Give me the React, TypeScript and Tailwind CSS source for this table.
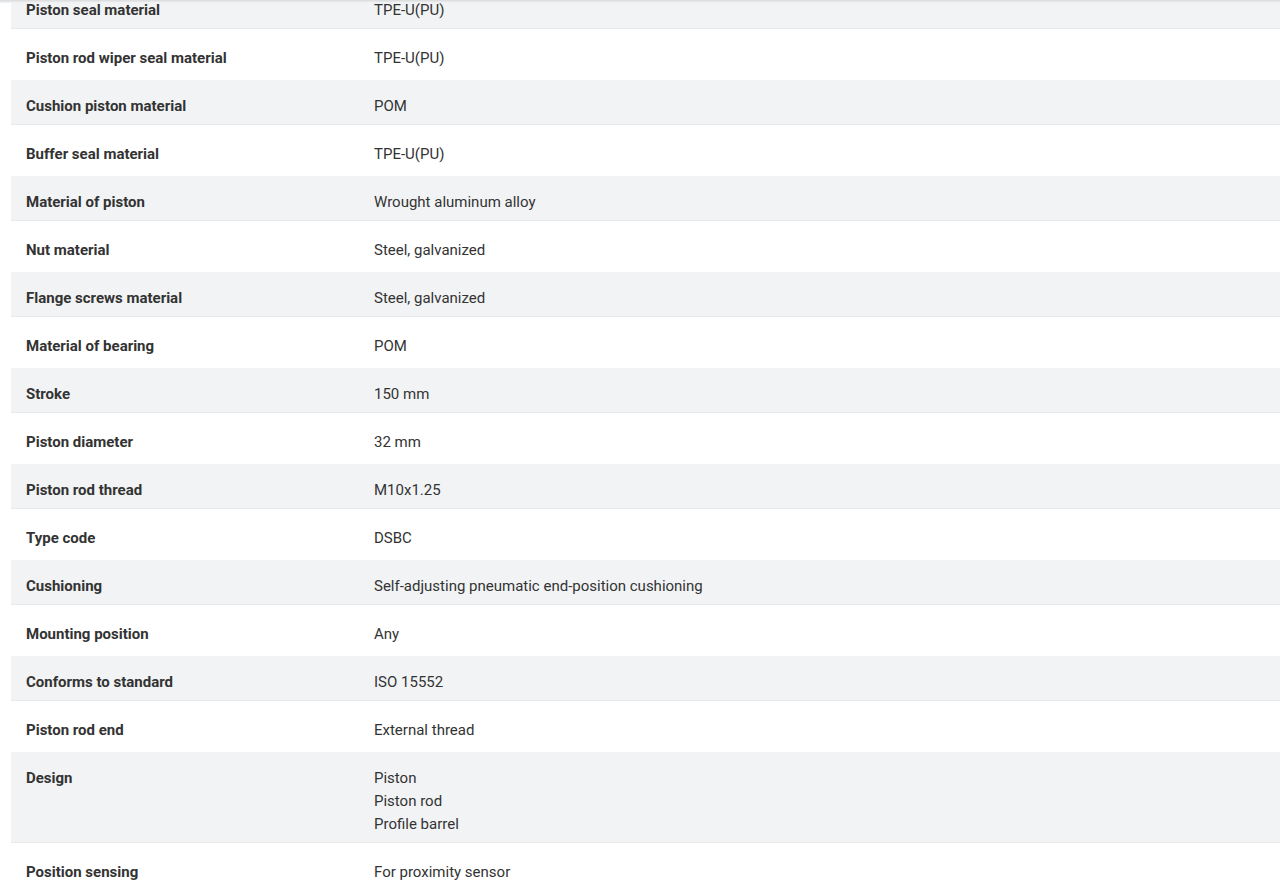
const rows: { label: string; value: string[] }[] = [
  { label: "Piston seal material", value: ["TPE-U(PU)"] },
  { label: "Piston rod wiper seal material", value: ["TPE-U(PU)"] },
  { label: "Cushion piston material", value: ["POM"] },
  { label: "Buffer seal material", value: ["TPE-U(PU)"] },
  { label: "Material of piston", value: ["Wrought aluminum alloy"] },
  { label: "Nut material", value: ["Steel, galvanized"] },
  { label: "Flange screws material", value: ["Steel, galvanized"] },
  { label: "Material of bearing", value: ["POM"] },
  { label: "Stroke", value: ["150 mm"] },
  { label: "Piston diameter", value: ["32 mm"] },
  { label: "Piston rod thread", value: ["M10x1.25"] },
  { label: "Type code", value: ["DSBC"] },
  { label: "Cushioning", value: ["Self-adjusting pneumatic end-position cushioning"] },
  { label: "Mounting position", value: ["Any"] },
  { label: "Conforms to standard", value: ["ISO 15552"] },
  { label: "Piston rod end", value: ["External thread"] },
  { label: "Design", value: ["Piston", "Piston rod", "Profile barrel"] },
  { label: "Position sensing", value: ["For proximity sensor"] },
];

export default function App() {
  return (
    <div
      className="relative h-[880px] overflow-hidden bg-white text-[15px] text-[#333]"
      style={{ fontFamily: "Roboto, 'Liberation Sans', sans-serif" }}
    >
      {/* sticky header edge */}
      <div className="absolute left-0 right-0 top-0 z-10 h-[3px] bg-gradient-to-b from-[#d9dadc] to-[#f4f5f6]" />

      <div className="-mt-[16px] flex flex-col gap-[3px] pl-[11px]">
        {rows.map((row, i) => (
          <div
            key={row.label}
            className={`grid grid-cols-[363px_1fr] pb-[7px] pt-[15px] leading-[23px] ${
              i % 2 === 0 ? "bg-[#f2f3f5] shadow-[inset_0_-1px_0_#e8e9eb]" : "bg-white"
            }`}
          >
            <div className="pl-[15px] font-bold">{row.label}</div>
            <div>
              {row.value.map((v) => (
                <div key={v}>{v}</div>
              ))}
            </div>
          </div>
        ))}
      </div>
    </div>
  );
}
